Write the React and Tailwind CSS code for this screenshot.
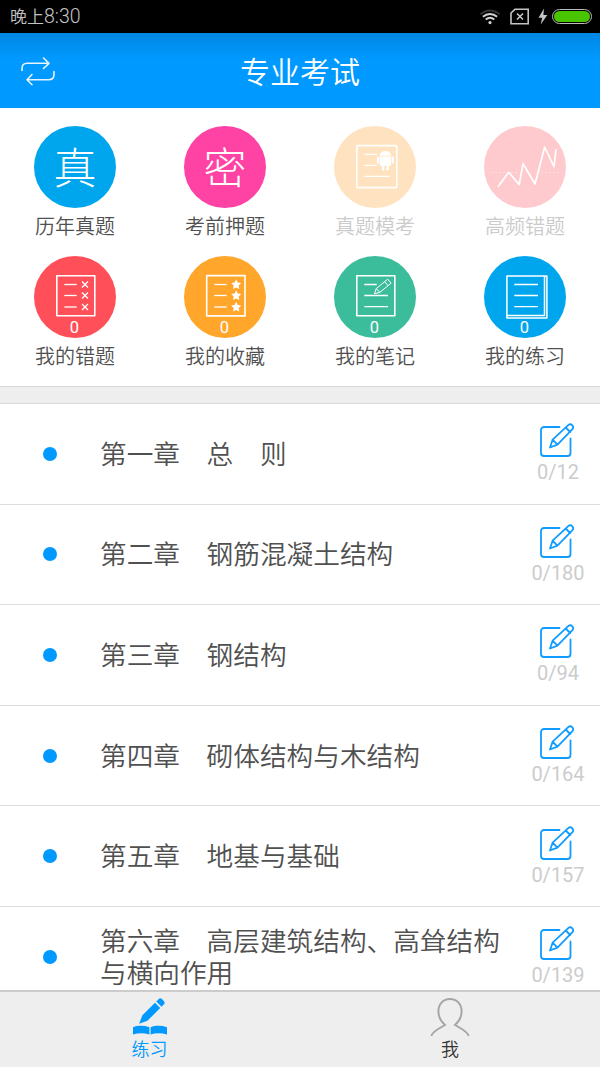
import React from 'react'

const LINE_ROWS = [28.5, 39.5, 51]
const STAR = 'M0 -5.2 L1.6 -1.9 L5 -1.5 L2.5 1 L3.1 4.6 L0 2.9 L-3.1 4.6 L-2.5 1 L-5 -1.5 L-1.6 -1.9 Z'

const Sheet = ({ children }) => (
  <svg viewBox="0 0 82 82" className="h-full w-full" fill="none" stroke="#fff" strokeWidth="1.3" strokeLinejoin="round">
    {children}
  </svg>
)

const MockExamIcon = () => (
  <Sheet>
    <rect x="22.8" y="19.6" width="40" height="42" rx="1" strokeWidth="1.6" />
    <path d="M30.3 28.4h12.4M30.3 39.4h12.4M30.3 50.4h25" />
    <g fill="#fff" stroke="none">
      <path d="M45.6 29.7c.3-3 2.7-4.7 5.8-4.7s5.5 1.7 5.8 4.7z" />
      <path d="M45.6 30.4h11.6v8.3a1 1 0 0 1-1 1h-9.6a1 1 0 0 1-1-1z" />
      <rect x="42.9" y="30.6" width="2.1" height="6.8" rx="1" />
      <rect x="57.8" y="30.6" width="2.1" height="6.8" rx="1" />
      <rect x="48" y="38.4" width="2.3" height="6" rx="1" />
      <rect x="52.5" y="38.4" width="2.3" height="6" rx="1" />
    </g>
    <path d="M48 24.2l1 1.6M54.8 24.2l-1 1.6" strokeWidth=".6" />
  </Sheet>
)

const TrendIcon = () => (
  <Sheet>
    <path d="M7 46.500h27M42 46.500h5M57 46.500h18" strokeWidth=".6" strokeDasharray="2 2" opacity=".6" />
    <path d="M14 60.8 24.7 46.3 35.2 58.6 39 37.6 51 58 60.7 21 70 40.6 72 23.3" strokeWidth="1.7" />
  </Sheet>
)

const MistakesIcon = () => (
  <Sheet>
    <rect x="22.8" y="19.8" width="38" height="40" strokeWidth="1.6" />
    {LINE_ROWS.map((y) => (
      <g key={y}>
        <path d={`M30.3 ${y}h12.4`} />
        <path d={`M48 ${y - 3}l6 6m0 -6l-6 6`} />
      </g>
    ))}
  </Sheet>
)

const FavoritesIcon = () => (
  <Sheet>
    <rect x="22.7" y="19.6" width="38.3" height="40.3" strokeWidth="1.6" />
    {LINE_ROWS.map((y) => (
      <g key={y}>
        <path d={`M30.3 ${y}h12.4`} />
        <path d={STAR} transform={`translate(52.2 ${y})`} fill="#fff" stroke="none" />
      </g>
    ))}
  </Sheet>
)

const NotesIcon = () => (
  <Sheet>
    <rect x="22.8" y="19.8" width="38" height="40" strokeWidth="1.6" />
    <path d="M30.3 28.5h12.4M30.3 39.5h23.7M30.3 50.7h23.7" />
    <path d="M40.5 37.7l1.8-5.2 11.4-9.3 3.4 4-11.3 9.2zM42.3 32.5l3.5 3.9M50.7 25.7l3.4 4" strokeWidth="1" />
  </Sheet>
)

const PracticeBookIcon = () => (
  <Sheet>
    <rect x="22.9" y="20" width="40" height="42" strokeWidth="1.5" />
    <path d="M60.5 20v39.5h-37.5" strokeWidth="1.5" />
    <path d="M30.3 28.5h23.7M30.3 39.5h23.7M30.3 50.7h23.7" />
  </Sheet>
)

const shortcuts = [
  { label: '历年真题', color: 'bg-[#00a6ed]', glyph: '真' },
  { label: '考前押题', color: 'bg-[#ff43a4]', glyph: '密' },
  { label: '真题模考', color: 'bg-[#ffe2bf]', icon: MockExamIcon, disabled: true },
  { label: '高频错题', color: 'bg-[#ffcacd]', icon: TrendIcon, disabled: true },
  { label: '我的错题', color: 'bg-[#ff5059]', icon: MistakesIcon, count: 0 },
  { label: '我的收藏', color: 'bg-[#ffa62b]', icon: FavoritesIcon, count: 0 },
  { label: '我的笔记', color: 'bg-[#3bbd9b]', icon: NotesIcon, count: 0 },
  { label: '我的练习', color: 'bg-[#00a6ed]', icon: PracticeBookIcon, count: 0 },
]

const chapters = [
  { title: '第一章　总　则', total: 12 },
  { title: '第二章　钢筋混凝土结构', total: 180 },
  { title: '第三章　钢结构', total: 94 },
  { title: '第四章　砌体结构与木结构', total: 164 },
  { title: '第五章　地基与基础', total: 157 },
  { title: '第六章　高层建筑结构、高耸结构与横向作用', total: 139 },
]

const StatusBar = () => (
  <div className="flex h-[33px] shrink-0 items-center justify-between bg-black pr-2 pl-2.5 text-[#c4c4c4]">
    <span className="pt-px font-[Roboto,'Noto_Sans_CJK_SC',sans-serif] text-[17px] leading-none font-[350]">
      晚上<span className="text-[19.5px]">8:30</span>
    </span>
    <div className="flex items-center">
      <svg className="mr-px" width="22" height="18" viewBox="0 0 22 18" fill="none" stroke="#d0d0d0" strokeWidth="1.9">
        <path d="M1.5 6.2c5.5-5 13.5-5 19 0" stroke="#333" />
        <path d="M3.9 8.7c4.2-3.7 10-3.7 14.2 0M6.7 11.6c2.6-2.2 6-2.2 8.6 0" />
        <circle cx="11" cy="14.6" r="1.6" fill="#d0d0d0" stroke="none" />
      </svg>
      <svg className="ml-2" width="20" height="17" viewBox="0 0 20 17" fill="none" stroke="#c4c4c4" strokeWidth="1.6">
        <path d="M5 1.3h13.2v14.4H1V5z" />
        <path d="M7 5.5l6 6m0-6l-6 6" />
      </svg>
      <svg className="ml-2" width="10" height="17" viewBox="0 0 10 17" fill="#c4c4c4">
        <path d="M6 .5.5 9.7h3.7L2.7 16.5 9.3 7H5.4z" />
      </svg>
      <div className="ml-1 h-[15px] w-10 rounded-full border border-[#bbb] p-px">
        <div className="h-full rounded-full bg-[#48c400]" />
      </div>
    </div>
  </div>
)

const Header = () => (
  <header className="grid h-[75px] shrink-0 grid-cols-[150px_1fr_150px] items-center bg-linear-to-b from-[#0087e3] to-[#0099ff] to-35%">
    <svg className="ml-5" width="36" height="30" viewBox="0 0 36 30" fill="none" stroke="#e6f5ff" strokeWidth="1.6" strokeLinecap="round" strokeLinejoin="round">
      <path d="M2 14.5v-2c0-3.5 2-5.2 5.2-5.2h21.3M23.5 2l5.500 5.300-5.500 5.200" />
      <path d="M34 15.5v3c0 3.5-2 5.2-5.2 5.2H7.5M12 18.500l-5 5.200 5 5" />
    </svg>
    <h1 className="pb-0.5 text-center text-[30px] leading-none font-[350] text-white">专业考试</h1>
  </header>
)

const Shortcut = ({ label, color, glyph, icon: Icon, count, disabled }) => (
  <div className="flex h-[130.5px] flex-col items-center">
    <div className={`relative flex size-[82px] items-center justify-center rounded-full ${color}`}>
      {glyph ? <span className="pb-0.5 text-[43px] leading-none font-extralight text-white">{glyph}</span> : <Icon />}
      {count !== undefined ? (
        <span className="absolute inset-x-0 bottom-0.5 pr-px text-center font-[Roboto] text-[16.5px] leading-4 text-white">
          {count}
        </span>
      ) : null}
    </div>
    <span className={`mt-1 text-xl leading-7 font-[350] ${disabled ? 'text-[#cbcbcb]' : 'text-[#505050]'}`}>
      {label}
    </span>
  </div>
)

const EditIcon = () => (
  <svg width="36" height="36" viewBox="0 0 36 36" fill="none" stroke="#109cff" strokeWidth="1.8" strokeLinejoin="round" strokeLinecap="round">
    <path d="M20.5 5H5a3 3 0 0 0-3 3v23a3 3 0 0 0 3 3h23.5a3 3 0 0 0 3-3V16.500" />
    <path d="M11 25.5l2.6-7.8L29.5 2.8c2.8-1.8 6 1.7 4 4.4L18.4 22.6zM13.6 17.7l4.8 4.9M26.7 5.5l4.500 4.500" />
  </svg>
)

const ChapterRow = ({ title, total }) => (
  <li className="flex h-[100.6px] shrink-0 items-center border-b border-[#ddd]">
    <div className="flex w-[100px] shrink-0 justify-center">
      <span className="size-3.5 rounded-full bg-[#0099ff]" />
    </div>
    <p className="w-[416px] shrink-0 pr-3 pb-0.5 text-[26.67px] leading-8 font-[350] text-[#505050]">{title}</p>
    <div className="flex w-[84px] flex-col items-center pb-px">
      <div className="mr-0.5">
        <EditIcon />
      </div>
      <span className="mt-0.5 font-[Roboto] text-[20px] leading-6 text-[#ccc]">0/{total}</span>
    </div>
  </li>
)

const TabBar = () => (
  <nav className="grid h-[77px] shrink-0 grid-cols-2 border-t-2 border-[#ccc] bg-[#eee] text-lg leading-6 font-[350]">
    <div className="flex flex-col items-center pt-1.5 text-[#0099ff]">
      <svg width="36" height="38" viewBox="0 0 36 38" fill="currentColor">
        <path d="M7.2 25.8l3-8.2L23 4.8l5.2 5.2-12.8 12.8zM24.3 3.5l2.2-2.2a2.5 2.5 0 0 1 3.6 0l1.6 1.6a2.5 2.5 0 0 1 0 3.6l-2.2 2.2z" />
        <path d="M1 29.2c5-1.9 11-1.9 16.4 0v7.2c-5.4-1.7-11.4-1.7-16.4 0zM18.6 29.2c5-1.9 11-1.9 16.4 0v7.2c-5.4-1.7-11.4-1.7-16.4 0z" />
      </svg>
      <span className="pr-px">练习</span>
    </div>
    <div className="flex flex-col items-center pt-1.5 text-[#333]">
      <svg width="40" height="38" viewBox="0 0 40 38" fill="none" stroke="#a5a5a5" strokeWidth="1.9" strokeLinecap="round">
        <path d="M1.5 37.5c1-4 7-6.8 13.5-10.5-4-3.5-6.6-8-6.6-13.5C8.4 6 13.3 1 20 1s11.6 5 11.6 12.5c0 5.5-2.6 10-6.6 13.5 6.5 3.7 12.5 6.5 13.5 10.5" />
      </svg>
      <span>我</span>
    </div>
  </nav>
)

const App = () => (
  <div className="flex h-[1067px] w-[600px] flex-col overflow-hidden bg-white font-['Noto_Sans_CJK_SC',sans-serif]">
    <StatusBar />
    <Header />
    <section className="grid h-[278px] shrink-0 grid-cols-4 content-start pt-[17.5px]">
      {shortcuts.map((item) => (
        <Shortcut key={item.label} {...item} />
      ))}
    </section>
    <div className="h-[18px] shrink-0 border-y border-[#d8d8d8] bg-[#eee]" />
    <ul className="flex min-h-0 flex-1 flex-col overflow-hidden">
      {chapters.map((chapter) => (
        <ChapterRow key={chapter.title} {...chapter} />
      ))}
    </ul>
    <TabBar />
  </div>
)

export default App
